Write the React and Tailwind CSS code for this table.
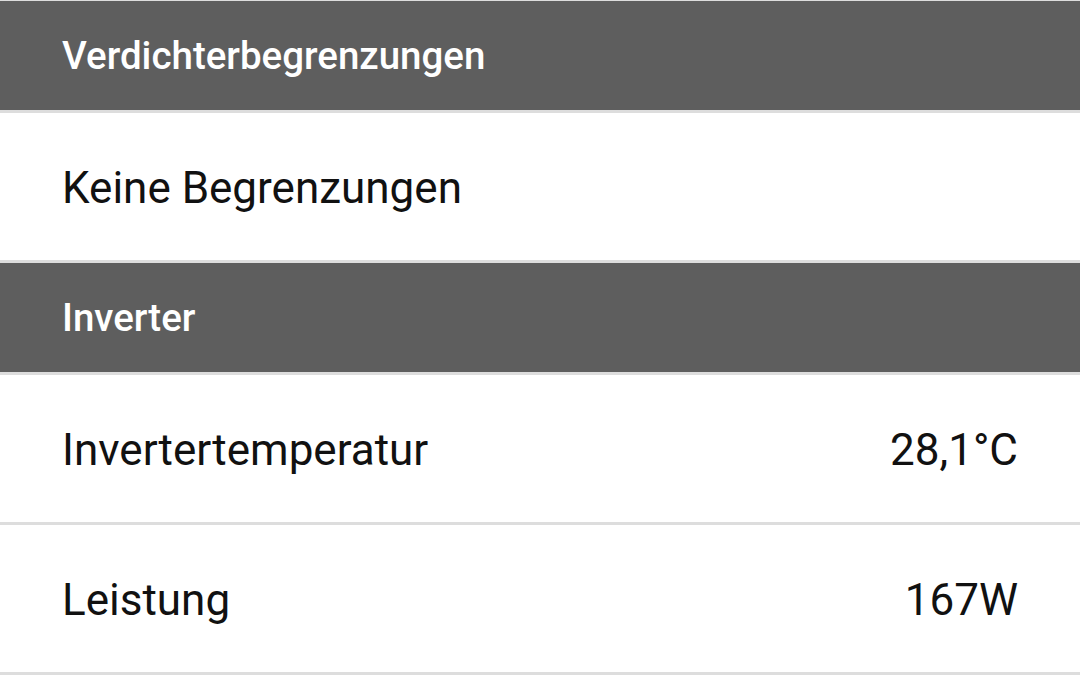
const Header = ({ title }) => (
	<div className="h-[112px] flex items-center pt-[2px] px-[62px] bg-[#5e5e5e] border-b-[3px] border-[#dddddd]">
		<span className="text-white text-[38.5px] font-medium leading-none">{title}</span>
	</div>
);

const Row = ({ label, value }) => (
	<div className="h-[150px] flex items-center justify-between pt-[3px] px-[62px] bg-white border-b-[3px] border-[#dddddd]">
		<span className="text-[#111111] text-[44px] leading-none">{label}</span>
		{value && <span className="text-[#111111] text-[44px] leading-none">{value}</span>}
	</div>
);

const App = () => {
	return (
		<div className="w-[1080px] h-[697px] bg-white overflow-hidden font-['Roboto',sans-serif]">
			<div className="h-px bg-[#dddddd]"></div>
			<Header title="Verdichterbegrenzungen" />
			<Row label="Keine Begrenzungen" />
			<Header title="Inverter" />
			<Row label="Invertertemperatur" value="28,1°C" />
			<Row label="Leistung" value="167W" />
		</div>
	);
};
export default App;
